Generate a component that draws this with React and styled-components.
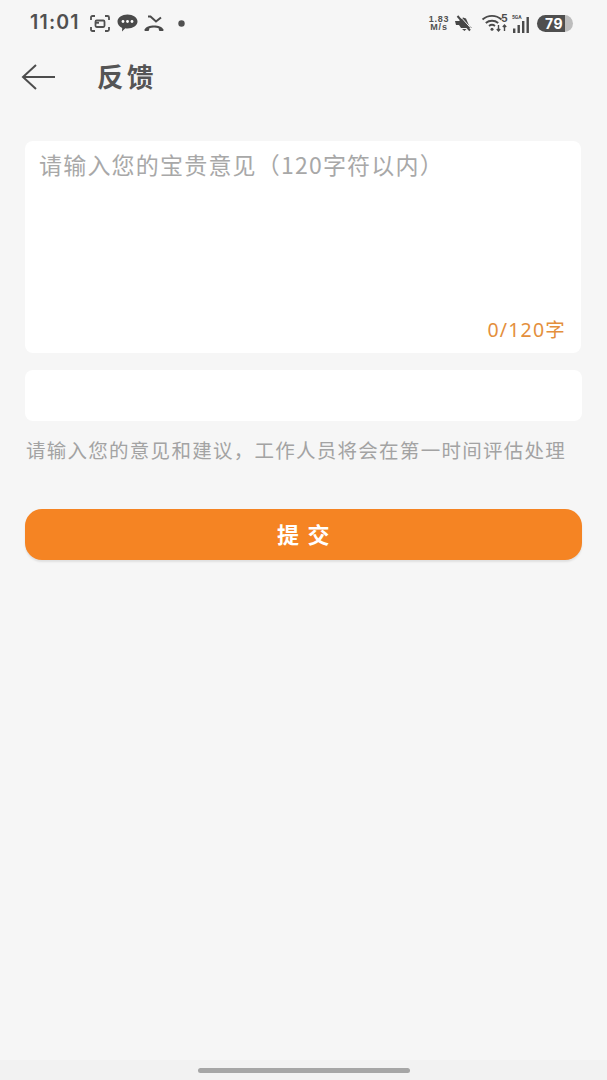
import React from "react";
import styled, { createGlobalStyle } from "styled-components";

const CJK = `"Noto Sans CJK SC", "Noto Sans", sans-serif`;

const Global = createGlobalStyle`
  html, body { margin: 0; padding: 0; background: #f6f6f6; }
  * { box-sizing: border-box; }
`;

const Page = styled.div`
  width: 607px;
  height: 1080px;
  background: #f6f6f6;
  display: flex;
  flex-direction: column;
  overflow: hidden;
  font-family: ${CJK};
`;

const StatusBar = styled.div`
  height: 46px;
  padding: 0 34px 0 30px;
  display: flex;
  align-items: center;
  justify-content: space-between;
  color: #4a4a4a;
`;

const StatusGroup = styled.div`
  display: flex;
  align-items: center;
`;

const Clock = styled.span`
  font: 600 19.5px/1 "Inter", "Roboto", sans-serif;
  letter-spacing: 1.2px;
  color: #505050;
  margin-right: 9px;
`;

const Speed = styled.span`
  font: 700 9px/8px "Liberation Sans", sans-serif;
  letter-spacing: 0.8px;
  color: #505050;
  text-align: center;
  width: 24px;
  display: flex;
  flex-direction: column;
`;

const SpeedLine = styled.span`
  display: block;
  height: 8px;
`;

const Battery = styled.div`
  width: 36px;
  height: 17px;
  border-radius: 9px;
  margin-left: 5px;
  overflow: hidden;
  background: linear-gradient(90deg, #4f4f4f 0 78%, #bdbdbd 78% 100%);
  color: #fff;
  font: 700 14px/17px "Inter", "Roboto", sans-serif;
  letter-spacing: 0.4px;
  text-align: center;
  padding-right: 2px;
`;

const Header = styled.header`
  height: 62px;
  display: flex;
  align-items: center;
  padding: 0 0 0 21px;
`;

const Title = styled.h1`
  margin: 0 0 2px 41px;
  font: 700 26.5px/1 ${CJK};
  letter-spacing: 3.5px;
  color: #555;
`;

const Form = styled.main`
  flex: 1;
  display: flex;
  flex-direction: column;
  padding: 33px 25px 0;
`;

const Card = styled.div`
  width: 556px;
  height: 212px;
  background: #fff;
  border-radius: 8px;
  padding: 9px 15px 11px 14px;
  display: flex;
  flex-direction: column;
  justify-content: space-between;
`;

const Placeholder = styled.div`
  font: 400 23px/28px ${CJK};
  letter-spacing: 1.2px;
  color: #a8a8a8;
  white-space: nowrap;
`;

const Counter = styled.div`
  align-self: flex-end;
  font: 400 19.5px/24px "Noto Sans", ${CJK};
  letter-spacing: 1.2px;
  color: #e48f3c;
`;

const Input = styled.div`
  width: 557px;
  height: 51px;
  margin-top: 17px;
  background: #fff;
  border-radius: 8px;
`;

const Hint = styled.p`
  margin: 17px 0 0 1px;
  font: 400 19.5px/24px ${CJK};
  letter-spacing: 1.27px;
  color: #a3a3a3;
  white-space: nowrap;
`;

const Submit = styled.button`
  width: 557px;
  height: 51px;
  margin-top: 47px;
  border: 0;
  border-radius: 17px;
  background: #f58423;
  color: #fff;
  font: 700 22px/1 ${CJK};
  letter-spacing: 8.5px;
  padding: 0 0 4px 8px;
  box-shadow: 0 2px 2px rgba(0, 0, 0, 0.09);
`;

const NavBar = styled.div`
  height: 20px;
  background: #f2f2f2;
  display: flex;
  justify-content: center;
  padding-top: 8px;
`;

const HomePill = styled.div`
  width: 212px;
  height: 5px;
  border-radius: 3px;
  background: #a6a6a6;
`;

const Ico = styled.svg`
  display: block;
  flex: none;
  overflow: visible;
  margin-left: ${(p) => p.$ml || 0}px;
`;

const ScanIcon = () => (
  <Ico $ml={1} width="20" height="17" viewBox="0 0 20 17" fill="none" stroke="#505050" strokeWidth="1.8">
    <path d="M1 5V2.5Q1 1 2.5 1H5M15 1h2.5Q19 1 19 2.5V5M19 12v2.5Q19 16 17.5 16H15M5 16H2.5Q1 16 1 14.5V12" />
    <rect x="5.5" y="5.5" width="9" height="6.5" rx="1.2" />
    <path d="M6 7.8h3" />
  </Ico>
);

const ChatIcon = () => (
  <Ico $ml={7} width="21" height="18" viewBox="0 0 21 18">
    <path d="M10.5 0.5c5.5 0 10 3 10 7s-4.5 7-10 7c-.8 0-1.5-.1-2.2-.2L5 17.5l.2-3.6C2.2 12.7.5 10.3.5 7.5.5 3.5 5 .5 10.5.5z" fill="#4a4a4a" />
    <circle cx="6" cy="7.500" r="1.400" fill="#fff" />
    <circle cx="10.500" cy="7.500" r="1.400" fill="#fff" />
    <circle cx="15" cy="7.500" r="1.400" fill="#fff" />
  </Ico>
);

const MissedIcon = () => (
  <Ico $ml={6} width="20" height="17" viewBox="0 0 20 17" fill="none" stroke="#4a4a4a">
    <path d="M4 1.500h2.500l5.500 5 5-4" strokeWidth="2" />
    <path d="M.5 14.500c2.500-5.500 16.500-5.500 19 0 .3.800-.2 1.500-1 1.500h-2.500c-.8 0-1-.6-1.200-1.500l-.2-1.200c-2.800-1-6.400-1-9.200 0l-.2 1.200c-.2.900-.4 1.500-1.200 1.500H1.500c-.8 0-1.300-.7-1-1.500z" fill="#4a4a4a" stroke="none" />
  </Ico>
);

const DotIcon = () => (
  <Ico $ml={14} width="7" height="7" viewBox="0 0 7 7">
    <circle cx="3.500" cy="3.500" r="3.200" fill="#505050" />
  </Ico>
);

const MuteIcon = () => (
  <Ico $ml={3} width="19" height="17" viewBox="0 0 19 17">
    <path d="M1 6h4l4-3.500 3 1 3 7 3 2.500H7l-2-3H2z" fill="#474747" />
    <path d="M8 14h4.500l-2 2z" fill="#474747" />
    <path d="M3.500 1l12.500 14.500" stroke="#474747" strokeWidth="2" />
    <path d="M5.500 .5l13 14.500" stroke="#f6f6f6" strokeWidth="1" />
  </Ico>
);

const WifiIcon = () => (
  <Ico $ml={9} width="27" height="20" viewBox="0 0 27 20" fill="none" stroke="#4a4a4a" strokeWidth="1.900">
    <path d="M0.500 6.500c5.500-4.800 13.500-4.800 19 0" />
    <path d="M3.800 10c3.600-3 8.800-3 12.400 0" />
    <path d="M7 13c1.800-1.400 4.200-1.400 6 0" />
    <circle cx="10" cy="16.300" r="1.500" fill="#4a4a4a" stroke="none" />
    <path d="M16.500 12v6M14.800 16l1.700 2 1.700-2M22.500 18v-6M20.800 14l1.700-2 1.700 2" strokeWidth="1.400" />
    <text x="19" y="8.500" fontSize="10.500" fontWeight="700" fontFamily="Inter, sans-serif" fill="#4a4a4a" stroke="none">5</text>
  </Ico>
);

const SignalIcon = () => (
  <Ico $ml={3} width="20" height="21" viewBox="0 0 20 21">
    <text x="0" y="6" fontSize="5" fontWeight="700" fontFamily="Roboto, sans-serif" fill="#4a4a4a">5GA</text>
    <rect x="1" y="15.500" width="2.400" height="4.500" fill="#4a4a4a" />
    <rect x="5.500" y="12" width="2.400" height="8" fill="#4a4a4a" />
    <rect x="10" y="8" width="2.400" height="12" fill="#4a4a4a" />
    <rect x="14.500" y="4" width="2.400" height="16" fill="#4a4a4a" />
  </Ico>
);

const BackArrow = () => (
  <Ico width="35" height="28" viewBox="0 0 35 28" fill="none" stroke="#4d4d4d" strokeWidth="2">
    <path d="M34 14H2M15 2L2 14l13 12" />
  </Ico>
);

export default function App() {
  return (
    <Page>
      <Global />
      <StatusBar>
        <StatusGroup>
          <Clock>11:01</Clock>
          <ScanIcon />
          <ChatIcon />
          <MissedIcon />
          <DotIcon />
        </StatusGroup>
        <StatusGroup>
          <Speed>
            <SpeedLine>1.83</SpeedLine>
            <SpeedLine>M/s</SpeedLine>
          </Speed>
          <MuteIcon />
          <WifiIcon />
          <SignalIcon />
          <Battery>79</Battery>
        </StatusGroup>
      </StatusBar>
      <Header>
        <BackArrow />
        <Title>反馈</Title>
      </Header>
      <Form>
        <Card>
          <Placeholder>请输入您的宝贵意见（120字符以内）</Placeholder>
          <Counter>0/120字</Counter>
        </Card>
        <Input />
        <Hint>请输入您的意见和建议，工作人员将会在第一时间评估处理</Hint>
        <Submit>提交</Submit>
      </Form>
      <NavBar>
        <HomePill />
      </NavBar>
    </Page>
  );
}
